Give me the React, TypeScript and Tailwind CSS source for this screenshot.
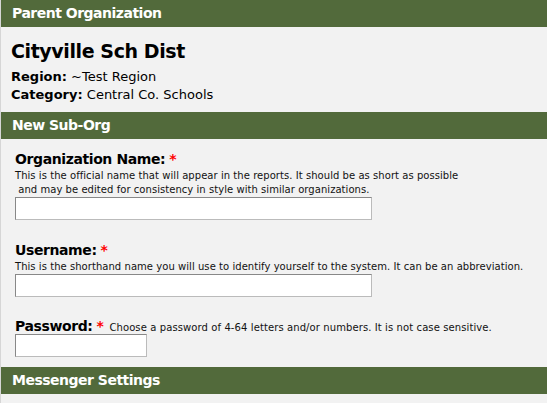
import React from 'react';

const font = { fontFamily: '"DejaVu Sans", Verdana, sans-serif' };

const Bar: React.FC<{ title: string }> = ({ title }) => (
  <div className="h-[27px] bg-[#526a3b] text-white font-bold text-[14px] tracking-[-0.5px] px-[11px] flex items-center">
    {title}
  </div>
);

const Req = () => <span className="text-[#ff0000] ml-[4px]">*</span>;

const inputCls =
  'block h-[23px] bg-white border border-t-[#888] border-l-[#888] border-b-[#bbb] border-r-[#bbb]';

const App: React.FC = () => {
  return (
    <div className="min-h-[403px] bg-[#f2f2f2] text-black border-l border-[#d6d6d6]" style={font}>
      {/* Parent */}
      <Bar title="Parent Organization" />
      <div className="px-[10px] pt-[12px] pb-[8px]">
        <h1 className="text-[19px] tracking-[-0.4px] font-bold leading-[24px]">Cityville Sch Dist</h1>
        <div className="mt-[5px] text-[13px] leading-[18px]">
          <div><span className="font-bold">Region:</span> ~Test Region</div>
          <div><span className="font-bold">Category:</span> Central Co. Schools</div>
        </div>
      </div>

      {/* New Sub-Org */}
      <Bar title="New Sub-Org" />
      <div className="px-[14px] pt-[10px] pb-[10px]">
        <div className="text-[14px] tracking-[-0.4px] font-bold leading-[20px]">Organization Name:<Req /></div>
        <p className="text-[10px] tracking-[0.05px] leading-[14px] text-[#111]">
          This is the official name that will appear in the reports. It should be as short as possible
          <br />&nbsp;and may be edited for consistency in style with similar organizations.
        </p>
        <input type="text" className={`${inputCls} w-[357px]`} />

        <div className="mt-[20px] text-[14px] tracking-[-0.4px] font-bold leading-[20px]">Username:<Req /></div>
        <p className="text-[10px] tracking-[0.05px] leading-[14px] text-[#111]">
          This is the shorthand name you will use to identify yourself to the system. It can be an abbreviation.
        </p>
        <input type="text" className={`${inputCls} w-[357px]`} />

        <div className="mt-[21px] h-[16px] flex items-baseline">
          <span className="text-[14px] tracking-[-0.4px] font-bold leading-[16px]">Password:<Req /></span>
          <span className="text-[10px] tracking-[0.1px] leading-[16px] text-[#111] ml-[6px]">Choose a password of 4-64 letters and/or numbers. It is not case sensitive.</span>
        </div>
        <input type="password" className={`${inputCls} w-[132px]`} />
      </div>

      <Bar title="Messenger Settings" />
    </div>
  );
};

export default App;
